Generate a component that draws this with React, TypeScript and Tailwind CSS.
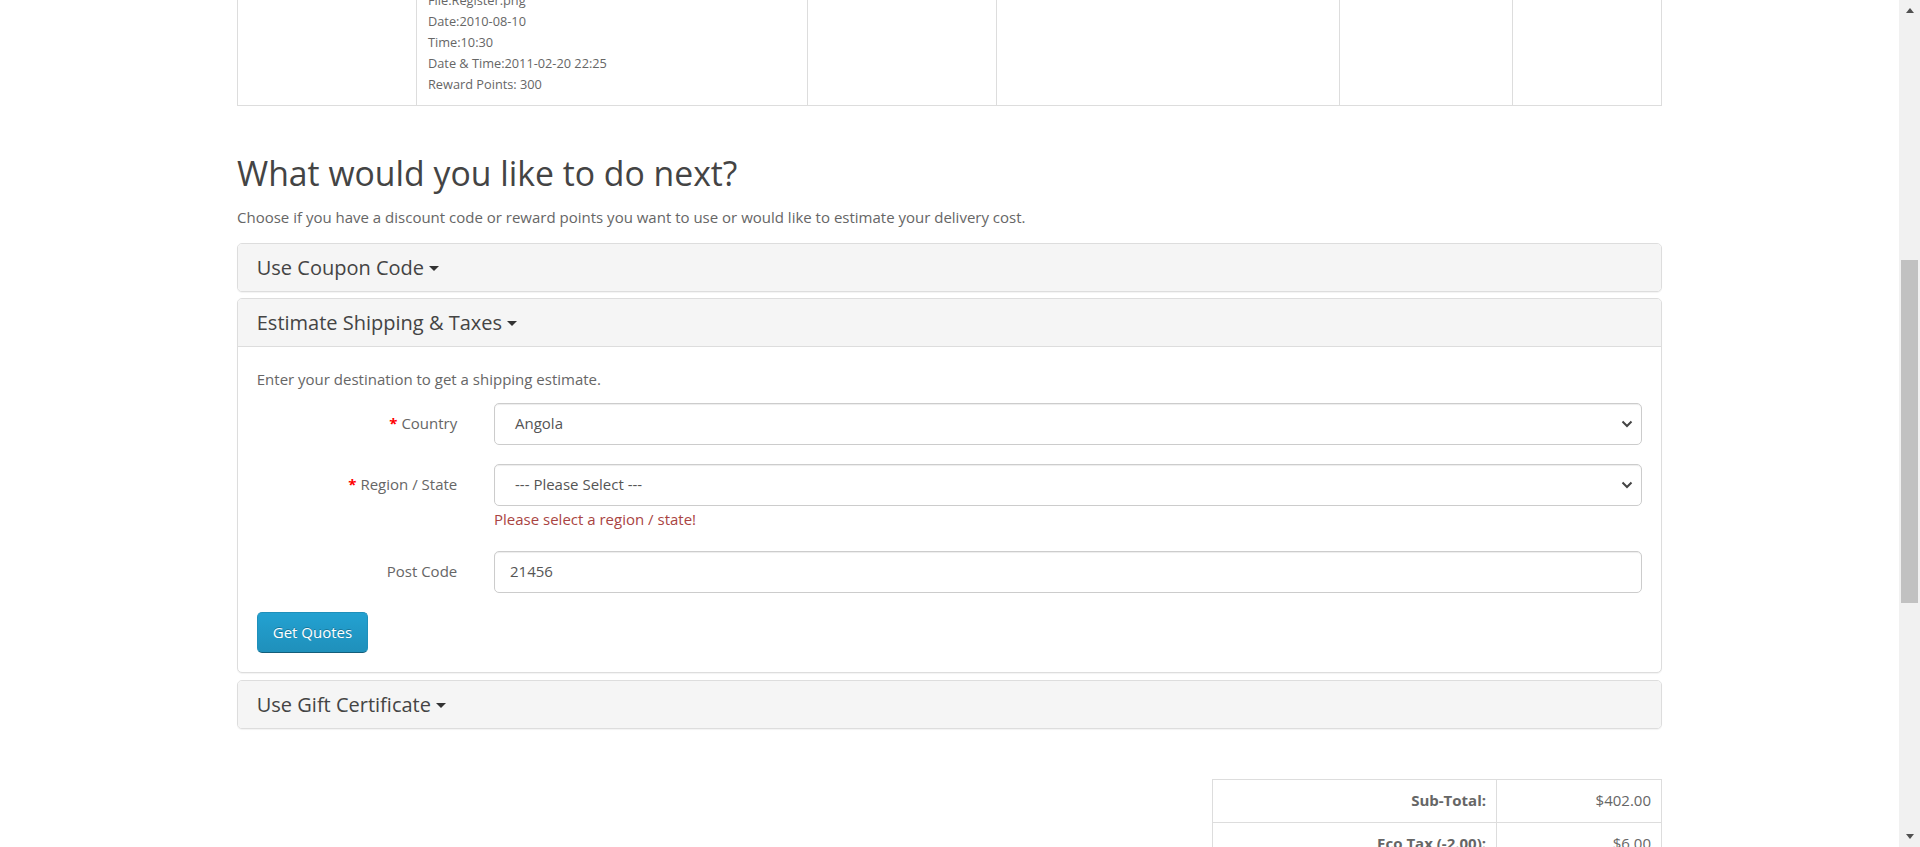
import type { ReactNode } from "react";

const optionLines = [
  "File:Register.png",
  "Date:2010-08-10",
  "Time:10:30",
  "Date & Time:2011-02-20 22:25",
  "Reward Points: 300",
];

export default function App() {
  return (
    <div className="flex h-[847px] w-[1920px] overflow-hidden bg-white font-['Open_Sans',sans-serif] text-[15px] leading-[21.43px] text-[#666]">
      <div className="w-[1899px] shrink-0">
        <div className="mx-auto w-[1425px]">
          <CartRow />

          <h2 className="mt-[49px] text-[33.75px] leading-[37px] font-normal text-[#444]">
            What would you like to do next?
          </h2>
          <p className="mt-[15px] leading-[21px]">
            Choose if you have a discount code or reward points you want to use or would like to estimate your delivery cost.
          </p>

          <div className="mt-[15px] flex flex-col">
            <Panel title="Use Coupon Code" />
            <Panel title="Estimate Shipping & Taxes" open className="mt-[6px]">
              <ShippingForm />
            </Panel>
            <Panel title="Use Gift Certificate" className="mt-[7px]" />
          </div>

          <Totals />
        </div>
      </div>
      <Scrollbar />
    </div>
  );
}

function CartRow() {
  const widths = ["w-[179px]", "w-[391px]", "w-[189px]", "w-[343px]", "w-[173px]", "w-[149px]"];
  return (
    <div className="-mt-[10px] flex border-b border-l border-[#ddd]">
      {widths.map((w, i) => (
        <div key={i} className={`${w} shrink-0 border-r border-[#ddd] pb-[10px] px-[10px]`}>
          {i === 1 &&
            optionLines.map((line) => (
              <div key={line} className="h-[21px] pl-[1px] text-[12.75px] leading-[21px] text-[#666]">
                {line}
              </div>
            ))}
        </div>
      ))}
    </div>
  );
}

function Caret() {
  return (
    <span className="inline-block h-0 w-0 -translate-y-[1px] border-x-[5px] border-t-[5px] border-x-transparent border-t-[#333] align-middle" />
  );
}

type PanelProps = { title: string; open?: boolean; className?: string; children?: ReactNode };

function Panel({ title, open, className = "", children }: PanelProps) {
  return (
    <div className={`overflow-hidden rounded-[5px] border border-[#ddd] bg-white shadow-[0_1px_1px_rgba(0,0,0,0.05)] ${className}`}>
      <div className={`bg-[#f5f5f5] px-[18.75px] py-[13px] ${open ? "border-b border-[#ddd]" : ""}`}>
        <h4 className="text-[20px] leading-[21px] text-[#444]">
          {title} <Caret />
        </h4>
      </div>
      {open && children}
    </div>
  );
}

function SelectArrow() {
  return (
    <svg className="pointer-events-none absolute right-[8px] top-1/2 -translate-y-1/2" width="12" height="8" viewBox="0 0 12 8">
      <polyline points="1.5,1.5 6,6 10.5,1.5" fill="none" stroke="#444" strokeWidth="2" />
    </svg>
  );
}

function FakeSelect({ value }: { value: string }) {
  return (
    <div className="relative flex h-[42px] items-center rounded-[5px] border border-[#ccc] bg-white pl-[20px] text-[15px] text-[#555] shadow-[inset_0_1px_1px_rgba(0,0,0,0.075)]">
      {value}
      <SelectArrow />
    </div>
  );
}

function FormRow({ label, required, children, className = "" }: { label: string; required?: boolean; children: ReactNode; className?: string }) {
  return (
    <div className={`flex ${className}`}>
      <label className="w-[200.5px] shrink-0 pt-[10px] text-right leading-[21px]">
        {required && <b className="text-[#f00]">* </b>}
        {label}
      </label>
      <div className="ml-[36.75px] flex-1">{children}</div>
    </div>
  );
}

function ShippingForm() {
  return (
    <div className="px-[18.75px] pt-[22px] pb-[19px]">
      <p className="leading-[21px]">Enter your destination to get a shipping estimate.</p>
      <FormRow label="Country" required className="mt-[13px]">
        <FakeSelect value="Angola" />
      </FormRow>
      <FormRow label="Region / State" required className="mt-[19px]">
        <FakeSelect value="--- Please Select ---" />
        <div className="mt-[3px] leading-[21px] text-[#a94442]">Please select a region / state!</div>
      </FormRow>
      <FormRow label="Post Code" className="mt-[21px]">
        <div className="flex h-[42px] items-center rounded-[5px] border border-[#ccc] bg-white px-[15px] text-[15px] text-[#555] shadow-[inset_0_1px_1px_rgba(0,0,0,0.075)]">
          21456
        </div>
      </FormRow>
      <button className="mt-[19px] h-[41px] rounded-[5px] border border-[#1f90bb] border-b-[#145e7a] bg-gradient-to-b from-[#23a1d1] to-[#1f90bb] px-[15px] text-[15px] text-white [text-shadow:0_-1px_0_rgba(0,0,0,0.25)]">
        Get Quotes
      </button>
    </div>
  );
}

function Totals() {
  const rows = [
    ["Sub-Total:", "$402.00"],
    ["Eco Tax (-2.00):", "$6.00"],
  ];
  return (
    <div className="ml-auto mt-[50px] w-[450px] border-l border-t border-[#ddd]">
      {rows.map(([label, value]) => (
        <div key={label} className="flex h-[43px] border-b border-[#ddd]">
          <div className="w-[284px] border-r border-[#ddd] px-[10px] pt-[10px] text-right font-bold leading-[21px]">{label}</div>
          <div className="flex-1 border-r border-[#ddd] px-[10px] pt-[10px] text-right leading-[21px]">{value}</div>
        </div>
      ))}
    </div>
  );
}

function Scrollbar() {
  return (
    <div className="flex w-[21px] shrink-0 flex-col bg-[#f1f1f1]">
      <div className="flex h-[21px] items-center justify-center">
        <svg width="8" height="5" viewBox="0 0 8 5">
          <polygon points="4,0 8,5 0,5" fill="#505050" />
        </svg>
      </div>
      <div className="flex-1">
        <div className="mx-[2px] mt-[239px] h-[343px] bg-[#c1c1c1]" />
      </div>
      <div className="flex h-[21px] items-center justify-center">
        <svg width="8" height="5" viewBox="0 0 8 5">
          <polygon points="0,0 8,0 4,5" fill="#505050" />
        </svg>
      </div>
    </div>
  );
}
